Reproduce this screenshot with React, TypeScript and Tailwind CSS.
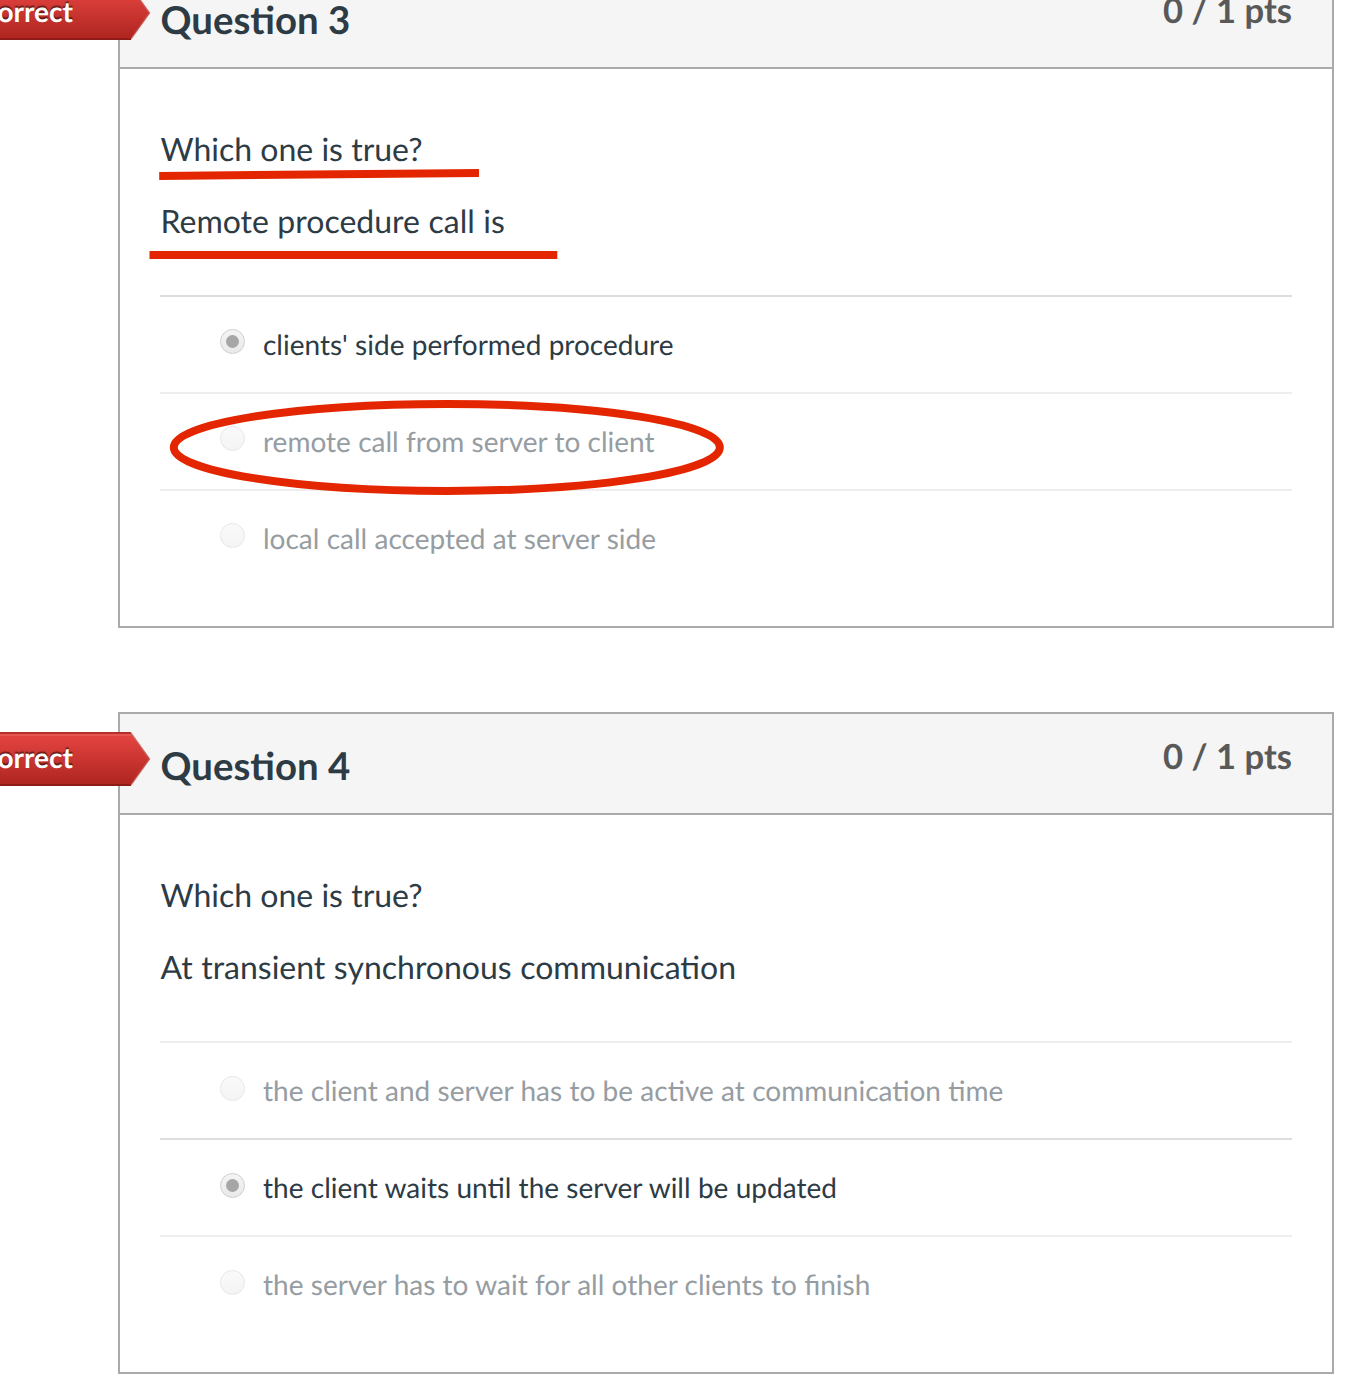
type Answer = { text: string; selected?: boolean };

type QuestionProps = {
  title: string;
  prompt: string;
  answers: Answer[];
  radioOffset: string;
};

function ResultFlag() {
  return (
    <div className="absolute -left-[120px] top-[18px] h-[54px] w-[152px]">
      <svg className="absolute inset-0" width="152" height="54" viewBox="0 0 152 54">
        <defs>
          <linearGradient id="flag" x1="0" y1="0" x2="0" y2="1">
            <stop offset="0" stopColor="#e84643" />
            <stop offset="1" stopColor="#ad241f" />
          </linearGradient>
        </defs>
        <path d="M0 0H130.500L150 27L130.500 54H0Z" fill="url(#flag)" />
        <path d="M0 1H131" stroke="#b3302b" strokeWidth="2" />
        <path d="M0 3H131" stroke="#e65d59" strokeWidth="1.500" />
        <path d="M0 53H131" stroke="#8d1b18" strokeWidth="2" />
        <path d="M131 1L149.500 27L131 53" fill="none" stroke="#c86561" strokeOpacity="0.600" strokeWidth="1.500" />
      </svg>
      <span className="absolute -left-[2.500px] top-[8px] text-[28px] leading-[34px] font-bold text-white [text-shadow:0_-2px_1px_rgba(0,0,0,0.5)]">
        orrect
      </span>
    </div>
  );
}

function Radio({ selected, offset }: { selected?: boolean; offset: string }) {
  return (
    <span className={offset}>
      <span
        className={
          selected
            ? "flex size-[25px] items-center justify-center rounded-full border border-[#cfcfcf] bg-linear-to-b from-[#f5f5f5] to-[#e9e9e9]"
            : "flex size-[25px] items-center justify-center rounded-full border border-[#e7e7e7] bg-linear-to-b from-[#fafafa] to-[#f4f4f4]"
        }
      >
        {selected && <span className="size-[13px] rounded-full bg-[#a6a6a6]" />}
      </span>
    </span>
  );
}

function Question({ title, prompt, answers, radioOffset }: QuestionProps) {
  return (
    <section className="relative ml-[118px] h-[662px] w-[1216px] border-2 border-[#aaaaaa] bg-white">
      <header className="flex h-[101px] justify-between border-b-2 border-[#aaaaaa] bg-[#f5f5f5] pl-[40.500px] pr-[40px]">
        <h2 className="pt-[29px] text-[38.400px] leading-[46px] font-bold text-[#2d3b45]">{title}</h2>
        <span className="pt-[21px] text-[34.600px] leading-[44px] font-bold text-[#595959]">0 / 1 pts</span>
      </header>
      <ResultFlag />
      <div className="px-[40px] pt-[56px]">
        <div className="flex flex-col gap-[24px] pb-[50px] pl-[0.500px] text-[32px] leading-[48px] text-[#2d3b45]">
          <p>Which one is true?</p>
          <p className="[word-spacing:0.3px]">{prompt}</p>
        </div>
        <ul>
          {answers.map((a) => (
            <li
              key={a.text}
              className={
                a.selected
                  ? "flex h-[97px] items-start gap-[18px] border-t-2 border-[#dddddd] pl-[60px] text-[28px] leading-[40px] text-[#2d3b45]"
                  : "flex h-[97px] items-start gap-[18px] border-t-2 border-[#eeeeee] pl-[60px] text-[28px] leading-[40px] text-[#969da2]"
              }
            >
              <Radio selected={a.selected} offset={radioOffset} />
              <span className="pt-[27px] [word-spacing:0.15px]">{a.text}</span>
            </li>
          ))}
        </ul>
      </div>
    </section>
  );
}

export default function App() {
  return (
    <main className="relative h-[1378px] w-[1356px] overflow-hidden bg-white font-[Lato,sans-serif] [text-rendering:geometricPrecision]">
      <div className="mt-[-34px] flex flex-col gap-[84px]">
        <Question
          title="Question 3"
          prompt="Remote procedure call is"
          radioOffset="pt-[32px]"
          answers={[
            { text: "clients' side performed procedure", selected: true },
            { text: "remote call from server to client" },
            { text: "local call accepted at server side" },
          ]}
        />
        <Question
          title="Question 4"
          prompt="At transient synchronous communication"
          radioOffset="pt-[33px]"
          answers={[
            { text: "the client and server has to be active at communication time" },
            { text: "the client waits until the server will be updated", selected: true },
            { text: "the server has to wait for all other clients to finish" },
          ]}
        />
      </div>
      {/* Red pen annotations */}
      <svg className="absolute left-0 top-0" width="760" height="520" fill="none" stroke="#e42600" strokeWidth="8">
        <path d="M159.200 176L479 173" />
        <path d="M149.500 255H557.300" />
        <ellipse cx="446.800" cy="447.400" rx="273" ry="43.500" />
      </svg>
    </main>
  );
}
